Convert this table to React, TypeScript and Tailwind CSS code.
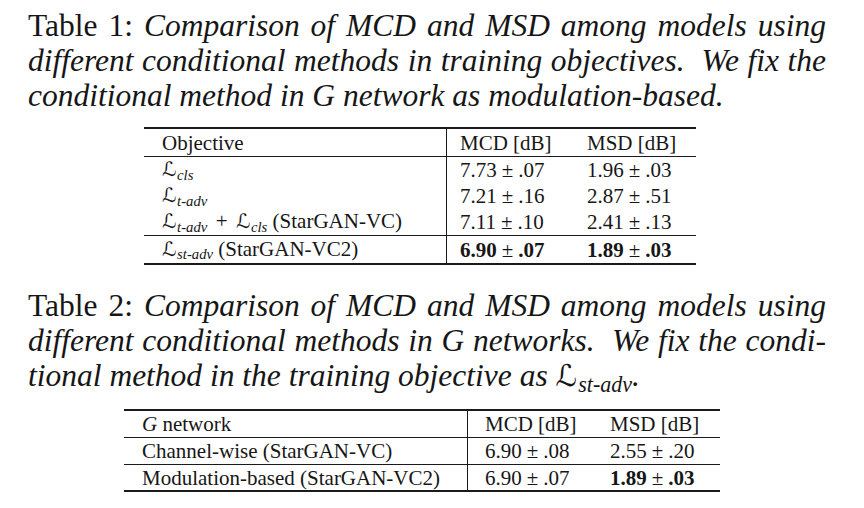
import React from "react";

const serif = { fontFamily: '"Liberation Serif", "Times New Roman", serif' };

function L({ sub }: { sub: string }) {
  return (
    <span className="whitespace-nowrap">
      <span className="font-['DejaVu_Sans',sans-serif] not-italic text-[0.95em]">ℒ</span>
      <span className="italic text-[0.7em] relative top-[0.25em] ml-[0.05em]">{sub}</span>
    </span>
  );
}

function Pm({ a, b, bold }: { a: string; b: string; bold?: boolean }) {
  return (
    <span className="whitespace-nowrap">
      <span className={bold ? "font-bold" : ""}>{a}</span>
      <span className="mx-[0.24em]">±</span>
      <span className={bold ? "font-bold" : ""}>{b}</span>
    </span>
  );
}

function CapLine({ children, last }: { children: React.ReactNode; last?: boolean }) {
  return (
    <div className={last ? "text-left" : "text-justify [text-align-last:justify]"}>{children}</div>
  );
}

export default function App() {
  return (
    <div
      className="w-[864px] h-[508px] bg-white text-[#161616] overflow-hidden flex flex-col"
      style={serif}
    >
      {/* Caption 1 */}
      <div className="mt-[8px] ml-[28px] w-[798px] text-[31.5px] leading-[35px]">
        <CapLine>
          <span>Table 1:</span>
          <span className="italic"> Comparison of MCD and MSD among models using</span>
        </CapLine>
        <CapLine>
          <span className="italic">different conditional methods in training objectives. &nbsp;We fix the</span>
        </CapLine>
        <CapLine last>
          <span className="italic">conditional method in G network as modulation-based.</span>
        </CapLine>
      </div>

      {/* Table 1 */}
      <div className="mt-[14px] ml-[144px] w-[552px] text-[21px] leading-[26px] border-t-2 border-b-2 border-[#1a1a1a]">
        <div className="flex border-b border-[#1a1a1a] h-[28px] items-center">
          <div className="w-[303px] h-full pl-[18px] border-r border-[#1a1a1a] flex items-center">Objective</div>
          <div className="w-[127px] pl-[13px]">MCD [dB]</div>
          <div className="flex-1 pl-[13px]">MSD [dB]</div>
        </div>
        {[
          [<L sub="cls" />, "7.73", ".07", "1.96", ".03"],
          [<L sub="t-adv" />, "7.21", ".16", "2.87", ".51"],
          [
            <span>
              <L sub="t-adv" /> <span className="mx-[0.15em]">+</span> <L sub="cls" /> (StarGAN-VC)
            </span>,
            "7.11",
            ".10",
            "2.41",
            ".13",
          ],
        ].map((r, i) => (
          <div key={i} className="flex h-[26px] items-center">
            <div className="w-[303px] h-full pl-[18px] border-r border-[#1a1a1a] flex items-center">{r[0]}</div>
            <div className="w-[127px] pl-[13px]">
              <Pm a={r[1] as string} b={r[2] as string} />
            </div>
            <div className="flex-1 pl-[13px]">
              <Pm a={r[3] as string} b={r[4] as string} />
            </div>
          </div>
        ))}
        <div className="flex border-t border-[#1a1a1a] h-[28px] items-center">
          <div className="w-[303px] h-full pl-[18px] border-r border-[#1a1a1a] flex items-center">
            <span>
              <L sub="st-adv" /> (StarGAN-VC2)
            </span>
          </div>
          <div className="w-[127px] pl-[13px]">
            <Pm a="6.90" b=".07" bold />
          </div>
          <div className="flex-1 pl-[13px]">
            <Pm a="1.89" b=".03" bold />
          </div>
        </div>
      </div>

      {/* Caption 2 */}
      <div className="mt-[23px] ml-[28px] w-[798px] text-[31.5px] leading-[35px]">
        <CapLine>
          <span>Table 2:</span>
          <span className="italic"> Comparison of MCD and MSD among models using</span>
        </CapLine>
        <CapLine>
          <span className="italic">different conditional methods in G networks. &nbsp;We fix the condi-</span>
        </CapLine>
        <CapLine last>
          <span className="italic">
            tional method in the training objective as <L sub="st-adv" />.
          </span>
        </CapLine>
      </div>

      {/* Table 2 */}
      <div className="mt-[13px] ml-[124px] w-[596px] text-[21px] leading-[26px] border-t-2 border-b-2 border-[#1a1a1a]">
        <div className="flex border-b border-[#1a1a1a] h-[27px] items-center">
          <div className="w-[344px] h-full pl-[18px] border-r border-[#1a1a1a] flex items-center">
            <span className="italic">G</span>&nbsp;network
          </div>
          <div className="w-[125px] pl-[17px]">MCD [dB]</div>
          <div className="flex-1 pl-[17px]">MSD [dB]</div>
        </div>
        <div className="flex border-b border-[#1a1a1a] h-[27px] items-center">
          <div className="w-[344px] h-full pl-[18px] border-r border-[#1a1a1a] flex items-center">
            Channel-wise (StarGAN-VC)
          </div>
          <div className="w-[125px] pl-[17px]">
            <Pm a="6.90" b=".08" />
          </div>
          <div className="flex-1 pl-[17px]">
            <Pm a="2.55" b=".20" />
          </div>
        </div>
        <div className="flex h-[25px] items-center">
          <div className="w-[344px] h-full pl-[18px] border-r border-[#1a1a1a] flex items-center">
            Modulation-based (StarGAN-VC2)
          </div>
          <div className="w-[125px] pl-[17px]">
            <Pm a="6.90" b=".07" />
          </div>
          <div className="flex-1 pl-[17px]">
            <Pm a="1.89" b=".03" bold />
          </div>
        </div>
      </div>
    </div>
  );
}
